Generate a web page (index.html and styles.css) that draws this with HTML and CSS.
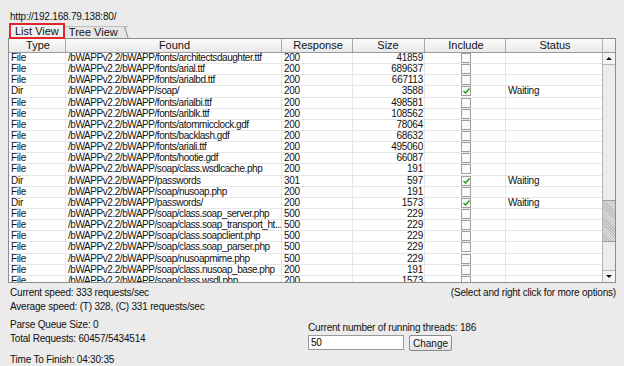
FILE: index.html
```html
<!DOCTYPE html>
<html lang="en">
<head>
  <meta charset="UTF-8">
  <title>DirBuster - Scan</title>
  <link rel="stylesheet" href="styles.css">
</head>
<body>

  <div class="url">http://192.168.79.138:80/</div>

  <div class="tabs">
    <div class="tab active">List View</div>
    <div class="tab">Tree View</div>
  </div>

  <div class="results">
    <div class="grid">
      <div class="row head">
        <div class="c type">Type</div>
        <div class="c found">Found</div>
        <div class="c resp">Response</div>
        <div class="c size">Size</div>
        <div class="c incl">Include</div>
        <div class="c status">Status</div>
      </div>
      <div id="rows"></div>
    </div>
    <div class="scrollbar">
      <div class="corner"></div>
      <div class="arrow up"><span></span></div>
      <div class="track">
        <div class="thumb"></div>
      </div>
      <div class="arrow down"><span></span></div>
    </div>
  </div>

  <div class="info">
    <div class="line split">
      <span>Current speed: 333 requests/sec</span>
      <span>(Select and right click for more options)</span>
    </div>
    <div class="line avg">Average speed: (T) 328, (C) 331 requests/sec</div>
    <div class="bottom">
      <div class="stats">
        <div class="line">Parse Queue Size: 0</div>
        <div class="line total">Total Requests: 60457/5434514</div>
        <div class="line finish">Time To Finish: 04:30:35</div>
      </div>
      <div class="threads">
        <div class="line">Current number of running threads: 186</div>
        <div class="controls">
          <input type="text" value="50">
          <button>Change</button>
        </div>
      </div>
    </div>
  </div>

  <script>
    var data = [
      ['File', '/bWAPPv2.2/bWAPP/fonts/architectsdaughter.ttf', '200', '41859', 0, ''],
      ['File', '/bWAPPv2.2/bWAPP/fonts/arial.ttf', '200', '689637', 0, ''],
      ['File', '/bWAPPv2.2/bWAPP/fonts/arialbd.ttf', '200', '667113', 0, ''],
      ['Dir', '/bWAPPv2.2/bWAPP/soap/', '200', '3588', 1, 'Waiting'],
      ['File', '/bWAPPv2.2/bWAPP/fonts/arialbi.ttf', '200', '498581', 0, ''],
      ['File', '/bWAPPv2.2/bWAPP/fonts/ariblk.ttf', '200', '108562', 0, ''],
      ['File', '/bWAPPv2.2/bWAPP/fonts/atommicclock.gdf', '200', '78064', 0, ''],
      ['File', '/bWAPPv2.2/bWAPP/fonts/backlash.gdf', '200', '68632', 0, ''],
      ['File', '/bWAPPv2.2/bWAPP/fonts/ariali.ttf', '200', '495060', 0, ''],
      ['File', '/bWAPPv2.2/bWAPP/fonts/hootie.gdf', '200', '66087', 0, ''],
      ['File', '/bWAPPv2.2/bWAPP/soap/class.wsdlcache.php', '200', '191', 0, ''],
      ['Dir', '/bWAPPv2.2/bWAPP/passwords', '301', '597', 1, 'Waiting'],
      ['File', '/bWAPPv2.2/bWAPP/soap/nusoap.php', '200', '191', 0, ''],
      ['Dir', '/bWAPPv2.2/bWAPP/passwords/', '200', '1573', 1, 'Waiting'],
      ['File', '/bWAPPv2.2/bWAPP/soap/class.soap_server.php', '500', '229', 0, ''],
      ['File', '/bWAPPv2.2/bWAPP/soap/class.soap_transport_ht...', '500', '229', 0, ''],
      ['File', '/bWAPPv2.2/bWAPP/soap/class.soapclient.php', '500', '229', 0, ''],
      ['File', '/bWAPPv2.2/bWAPP/soap/class.soap_parser.php', '500', '229', 0, ''],
      ['File', '/bWAPPv2.2/bWAPP/soap/nusoapmime.php', '500', '229', 0, ''],
      ['File', '/bWAPPv2.2/bWAPP/soap/class.nusoap_base.php', '200', '191', 0, ''],
      ['File', '/bWAPPv2.2/bWAPP/soap/class.wsdl.php', '200', '1573', 0, '']
    ];

    var html = '';
    data.forEach(function (r) {
      var box = r[4]
        ? '<span class="box on"><svg width="7" height="6" viewBox="0 0 7 6"><path d="M0.5 3 L2.5 5 L6.5 0.5" fill="none" stroke="#1a9a1a" stroke-width="1.4"/></svg></span>'
        : '<span class="box"></span>';
      html += '<div class="row">' +
        '<div class="c type">' + r[0] + '</div>' +
        '<div class="c found">' + r[1] + '</div>' +
        '<div class="c resp">' + r[2] + '</div>' +
        '<div class="c size">' + r[3] + '</div>' +
        '<div class="c incl">' + box + '</div>' +
        '<div class="c status">' + r[5] + '</div>' +
        '</div>';
    });
    document.getElementById('rows').innerHTML = html;
  </script>

</body>
</html>
```

FILE: styles.css
```css
body {
  margin: 0;
  padding: 11px 8px 0 8px;
  background: #ebebeb;
  font-family: "Liberation Sans", Arial, sans-serif;
  font-size: 10px;
  color: #111;
  width: 608px;
  height: 355px;
  overflow: hidden;
}
.url {
  padding-left: 2px;
  height: 12px;
  line-height: 12px;
  letter-spacing: -0.2px;
}
.tabs {
  display: flex;
  margin-top: 3px;
  padding-left: 2px;
  height: 12px;
  align-items: flex-end;
}
.tab {
  position: relative;
  height: 11px;
  line-height: 11px;
  padding: 0 10px 0 4px;
  font-size: 11px;
  border-top: 1px solid #bdbdbd;
  border-left: 1px solid #fff;
  background: #e6e6e6;
}
.tab::after {
  content: "";
  position: absolute;
  right: 1px;
  top: 0;
  width: 1px;
  height: 12px;
  background: #8c8c8c;
  transform: skewX(18deg);
}
.tab.active {
  height: 13px;
  line-height: 13px;
  padding: 0 5px 0 4px;
  outline: 2px solid #e0262c;
  outline-offset: -1px;
  background: #f0f0f0;
  z-index: 1;
}
.tab.active::after {
  display: none;
}
.results {
  display: flex;
  height: 243px;
  border: 1px solid #8d8d8d;
  background: #fff;
  overflow: hidden;
}
.grid {
  width: 594px;
  overflow: hidden;
}
.row {
  display: grid;
  grid-template-columns: 57px 216px 71px 72px 81px 97px;
  height: 11.15px;
  line-height: 10px;
  box-sizing: border-box;
  border-bottom: 1px solid #e6e6e6;
  letter-spacing: -0.25px;
}
.row .c {
  padding-left: 2px;
  white-space: nowrap;
  overflow: hidden;
  border-right: 1px solid #e6e6e6;
}
.row .found {
  letter-spacing: -0.45px;
}
.row.head {
  height: 14px;
  line-height: 13px;
  background: linear-gradient(#fafafa, #e9e9e9);
  border-bottom: 1px solid #9a9a9a;
  font-size: 11px;
  letter-spacing: 0;
}
.row.head .c {
  text-align: center;
  letter-spacing: 0;
  border-right: 1px solid #a9a9a9;
}
.row .size {
  text-align: right;
  padding: 0 1px 0 0;
}
.row .incl {
  display: flex;
  justify-content: center;
  align-items: center;
}
.box {
  width: 8px;
  height: 8px;
  border: 1px solid #9e9e9e;
  background: #fafafa;
  display: flex;
  align-items: center;
  justify-content: center;
}
.scrollbar {
  width: 12px;
  display: flex;
  flex-direction: column;
  background: #ececec;
  border-left: 1px solid #b5b5b5;
}
.corner {
  height: 14px;
  box-sizing: border-box;
  background: linear-gradient(#fafafa, #e9e9e9);
  border-bottom: 1px solid #9a9a9a;
}
.arrow {
  height: 11px;
  background: #f4f4f4;
  border-bottom: 1px solid #b5b5b5;
  display: flex;
  align-items: center;
  justify-content: center;
}
.arrow.down {
  border-bottom: none;
  border-top: 1px solid #b5b5b5;
}
.arrow span {
  width: 0;
  height: 0;
  border-left: 3px solid transparent;
  border-right: 3px solid transparent;
}
.arrow.up span {
  border-bottom: 3px solid #111;
}
.arrow.down span {
  border-top: 3px solid #111;
}
.track {
  flex: 1;
  display: flex;
  flex-direction: column;
  justify-content: flex-end;
  padding-bottom: 28px;
}
.thumb {
  height: 40px;
  border-top: 1px solid #9c9c9c;
  border-bottom: 1px solid #9c9c9c;
  background: repeating-linear-gradient(45deg, #bdbdbd 0 1px, #dcdcdc 1px 2px);
}
.info {
  padding: 4px 0 0 2px;
  letter-spacing: -0.2px;
}
.line {
  height: 12px;
  line-height: 12px;
}
.split {
  display: flex;
  justify-content: space-between;
}
.avg {
  margin-top: 2px;
}
.bottom {
  display: flex;
  margin-top: 6px;
}
.stats {
  width: 298px;
}
.total {
  margin-top: 2px;
}
.finish {
  margin-top: 9px;
}
.threads {
  padding-top: 3px;
}
.controls {
  display: flex;
  gap: 5px;
  margin-top: 1px;
}
input {
  width: 90px;
  height: 13px;
  padding: 0 2px;
  margin: 0;
  border: 1px solid #9a9a9a;
  font: 10px "Liberation Sans", Arial, sans-serif;
  letter-spacing: -0.2px;
  background: #fff;
}
button {
  height: 16px;
  padding: 0 3px;
  margin: 0;
  font: 10px "Liberation Sans", Arial, sans-serif;
  border: 1px solid #8a8a8a;
  border-radius: 2px;
  background: linear-gradient(#fbfbfb, #e3e3e3);
  color: #111;
}
```
